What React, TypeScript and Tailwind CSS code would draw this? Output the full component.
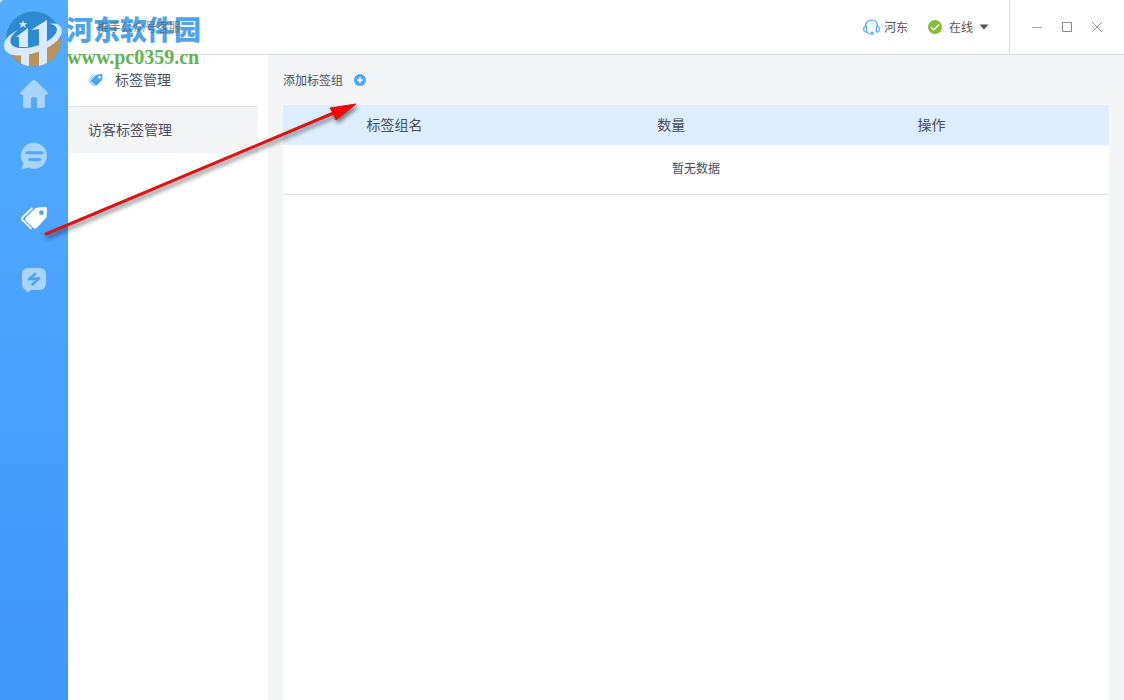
import React from 'react';

const FONT = "font-['Noto_Sans_CJK_SC',sans-serif]";

const columns = [
  { label: '标签组名', width: 'w-[27%]' },
  { label: '数量', width: 'w-[40%]' },
  { label: '操作', width: 'w-[23%]' },
  { label: '', width: 'w-[10%]' },
];

const TagsIcon: React.FC<{ className?: string }> = ({ className }) => (
  <svg viewBox="0 0 28 24" className={className} fill="currentColor" aria-hidden="true">
    <path
      fillRule="evenodd"
      d="M18 1.500l7.300-.5a1.500 1.500 0 0 1 1.700 1.600l-.5 7.800a4 4 0 0 1-1.100 2.300l-8.600 9a2.600 2.600 0 0 1-3.600.1L6 15a2.400 2.400 0 0 1-.1-3.400L14.500 3A5 5 0 0 1 18 1.500Zm3.500 2.800a2.400 2.400 0 1 0 0 4.800 2.400 2.400 0 0 0 0-4.800Z"
    />
    <path d="M12 2.500 2.800 11.200a2.200 2.200 0 0 0 0 3.200l8.200 8" fill="none" stroke="currentColor" strokeWidth="1.800" strokeLinecap="round" />
  </svg>
);

const HomeIcon = () => (
  <svg viewBox="0 0 28 28" className="size-7" fill="currentColor" aria-hidden="true">
    <path d="M12.500.6a2.200 2.200 0 0 1 3 0L27.300 12c1 .9.500 2.700-1 2.700H25v11a2.400 2.400 0 0 1-2.400 2.300H17v-9a1.700 1.700 0 0 0-1.700-1.700h-2.600A1.700 1.700 0 0 0 11 19v9H5.400A2.400 2.400 0 0 1 3 25.700v-11H1.700c-1.500 0-2-1.800-1-2.700Z" />
  </svg>
);

const ChatIcon = () => (
  <svg viewBox="0 0 28 28" className="size-7" aria-hidden="true">
    <path d="M14.300.8A13 13 0 1 1 8.500 25.600L1 27.500l2.500-6A13 13 0 0 1 14.300.8Z" fill="currentColor" />
    <path d="M7 10.800h15M9.800 17.500h10" stroke="#4fa6fc" strokeWidth="3" strokeLinecap="round" />
  </svg>
);

const BoltIcon = () => (
  <svg viewBox="0 0 28 26" className="h-[26px] w-7" aria-hidden="true">
    <path d="M8 1h12a6 6 0 0 1 6 6v10a6 6 0 0 1-6 6h-9l-3.500 2.500L5 22.500A6 6 0 0 1 2 17V7a6 6 0 0 1 6-6Z" fill="currentColor" />
    <path d="m15 7-6 5.300 10-1-6.500 6.200" fill="none" stroke="#4ca3fc" strokeWidth="2.600" strokeLinecap="round" strokeLinejoin="round" />
  </svg>
);

const navItems = [
  { label: '首页', icon: <HomeIcon />, active: false },
  { label: '会话', icon: <ChatIcon />, active: false },
  { label: '标签', icon: <TagsIcon className="h-6 w-7" />, active: true },
  { label: '快捷回复', icon: <BoltIcon />, active: false },
];

const SiteLogo = () => (
  <svg viewBox="0 0 60 60" className="absolute left-1 top-2 size-[60px]" aria-hidden="true">
    <defs>
      <clipPath id="disc">
        <circle cx="29.500" cy="31" r="27.500" />
      </clipPath>
    </defs>
    <g clipPath="url(#disc)">
      <path d="M0 0h60v60H0Z" fill="#2d8ad0" />
      <path d="M0 47c22 3 42-5 56-21l4 34H0Z" fill="#bd9257" />
      <path d="M12 29l12-9v19h-9V29ZM27 22l16-10v24l-8 3V21ZM17 46h8v14h-8ZM35 43l8-4v21h-8Z" fill="#d9eaff" />
    </g>
    <path d="M14 22C-3 30-4 43 8 47c17 3 43-7 49-20 3-8-3-13-11-11 7 1 8 5 6 9-5 9-23 16-36 15C4 39 3 30 14 22Z" fill="#d9eaff" />
    <path d="m19 12 1 3h3l-2 2 1 3-3-2-3 2 1-3-2-2h3Z" fill="#cfe6ff" />
  </svg>
);

const Watermark = () => (
  <div className="pointer-events-none absolute left-0 top-0 z-10">
    <SiteLogo />
    <div className="absolute left-[66px] top-[13px] whitespace-nowrap text-[27px] font-black leading-8 text-[#4fa3ec]">河东软件园</div>
    <div className="absolute left-[67px] top-[45px] whitespace-nowrap font-['Liberation_Serif',serif] text-[20px] font-bold leading-6 text-[#62b352]">
      www.pc0359.cn
    </div>
  </div>
);

const Arrow = () => (
  <svg viewBox="0 0 330 150" className="pointer-events-none absolute left-[38px] top-[96px] z-20 h-[150px] w-[330px] drop-shadow-[2px_3px_2px_rgba(0,0,0,0.5)]" aria-hidden="true">
    <path d="M8 138 298 16" stroke="#dc1414" strokeWidth="3" strokeLinecap="round" />
    <path d="M318 8 298 24 295 17 292 12Z" fill="#f00808" stroke="#e01010" />
  </svg>
);

const TopBar = () => (
  <header className="flex h-[55px] shrink-0 items-stretch border-b border-[#dadcdf] bg-white text-xs text-[#555]">
    <div className="flex flex-1 items-center pl-[29px]">
      <span className="relative z-20 text-[#555]/70">推手公众号客服</span>
    </div>
    <div className="flex items-center gap-1 pr-5">
      <svg viewBox="0 0 17 16" className="h-4 w-[17px]" fill="none" stroke="#4ba6f5" strokeWidth="1.200" aria-hidden="true">
        <path d="M2.500 7.500C2.500 3.500 5 1 8.500 1s6 2.500 6 6.500" />
        <path d="M3.600 7.500v5.500H2.500C1.500 13 .8 12.300.8 11.300V9.200c0-1 .7-1.700 1.700-1.700ZM13.400 7.500v5.500h1.100c1 0 1.700-.7 1.700-1.700V9.200c0-1-.7-1.700-1.700-1.700Z" />
        <path d="M3.500 13c.8 1.200 2.300 1.500 4.300 1.500" />
        <circle cx="9.200" cy="14.300" r="1.100" />
      </svg>
      <span>河东</span>
    </div>
    <button type="button" className="flex items-center pr-5">
      <svg viewBox="0 0 14 14" className="mr-[7px] size-[14px]" aria-hidden="true">
        <circle cx="7" cy="7" r="7" fill="#83bd39" />
        <path d="m2.800 6.800 3 3 5.400-5.300" fill="none" stroke="#fff" strokeWidth="1.200" />
      </svg>
      <span>在线</span>
      <svg viewBox="0 0 10 6" className="ml-[6px] h-[6px] w-[10px]" fill="#555" aria-hidden="true">
        <path d="M.5.500h9L5 5.500Z" />
      </svg>
    </button>
    <div className="flex items-center gap-5 border-l border-[#dadcdf] px-[22px]">
      <button type="button" aria-label="最小化">
        <svg viewBox="0 0 10 10" className="size-[10px]" stroke="#aaa" aria-hidden="true"><path d="M0 5.500h10" /></svg>
      </button>
      <button type="button" aria-label="最大化">
        <svg viewBox="0 0 10 10" className="size-[10px]" fill="none" stroke="#888" aria-hidden="true"><path d="M.5.500h9v9h-9Z" /></svg>
      </button>
      <button type="button" aria-label="关闭">
        <svg viewBox="0 0 10 10" className="size-[10px]" stroke="#999" aria-hidden="true"><path d="m0 0 10 10M10 0 0 10" /></svg>
      </button>
    </div>
  </header>
);

const App: React.FC = () => (
  <div className={`relative flex min-h-screen overflow-hidden bg-white text-[#474c5e] ${FONT}`}>
    {/* Navigation */}
    <nav className="flex w-[68px] shrink-0 flex-col items-center gap-[34px] rounded-tl bg-linear-to-b from-[#53acfe] to-[#4196fa] pt-20">
      {navItems.map((item) => (
        <button
          key={item.label}
          type="button"
          aria-label={item.label}
          className={`flex h-7 items-center ${item.active ? 'text-white' : 'text-[#a9d4fe]'}`}
        >
          {item.icon}
        </button>
      ))}
    </nav>

    <div className="flex min-w-0 flex-1 flex-col">
      <TopBar />
      <div className="flex flex-1 bg-[#f3f5f7]">
        {/* Tag menu */}
        <aside className="w-[200px] shrink-0 bg-white pr-[10px] text-sm">
          <div className="flex h-[52px] items-center gap-3 border-b border-[#dfe1e4] pb-0.5 pl-5">
            <TagsIcon className="h-[14px] w-[15px] text-[#4ba6f5]" />
            <span className="pb-0.5">标签管理</span>
          </div>
          <a href="#visitor-tags" className="flex h-[46px] items-center bg-[#f3f5f7] pb-0.5 pl-5">访客标签管理</a>
        </aside>

        <main className="flex min-w-0 flex-1 flex-col px-[15px]">
          <button type="button" className="flex h-[50px] items-center gap-[11px] self-start text-xs">
            添加标签组
            <svg viewBox="0 0 12 12" className="size-3" aria-hidden="true">
              <circle cx="6" cy="6" r="6" fill="#4ba8f8" />
              <path d="M6 3v6M3 6h6" stroke="#fff" strokeWidth="1.500" />
            </svg>
          </button>
          <div className="flex-1 bg-white">
            <table className="w-full table-fixed text-center">
              <thead>
                <tr className="h-10 bg-[#dceeff] text-sm">
                  {columns.map((c) => (
                    <th key={c.label} scope="col" className={`pb-0.5 font-normal ${c.width}`}>{c.label}</th>
                  ))}
                </tr>
              </thead>
              <tbody>
                <tr className="h-[49px] border-b border-[#dfe1e4] text-xs">
                  <td colSpan={4} className="pb-0.5">暂无数据</td>
                </tr>
              </tbody>
            </table>
          </div>
        </main>
      </div>
    </div>

    <Watermark />
    <Arrow />
  </div>
);

export default App;
